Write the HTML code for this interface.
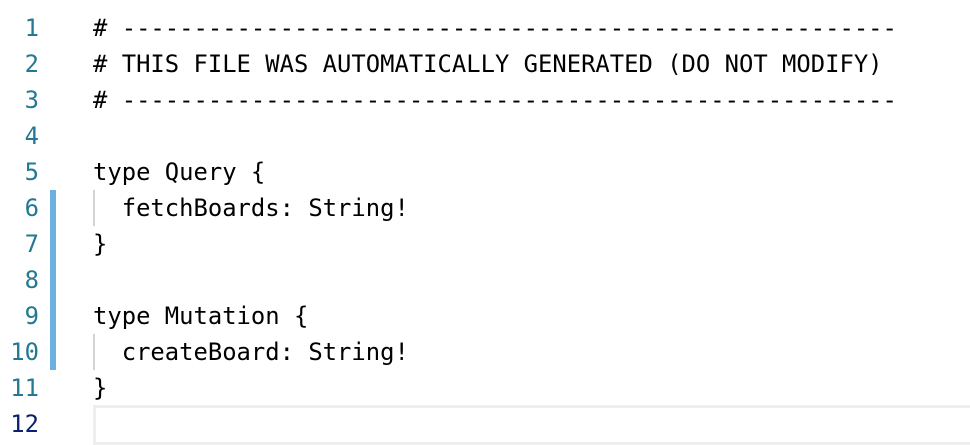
<!DOCTYPE html>
<html><head><style>
body{margin:0;width:970px;height:432px;background:#fff;overflow:hidden;position:relative;font-family:"DejaVu Sans Mono","Liberation Mono",monospace;font-size:23.85px;}
.ln{position:absolute;left:0;width:39px;text-align:right;color:#237893;height:36px;line-height:36px;}
.c{position:absolute;left:93px;color:#000;white-space:pre;height:36px;line-height:36px;}
.g{position:absolute;left:93px;width:2px;background:#d3d3d3;height:36px;}
.bar{position:absolute;left:50px;width:6px;top:190px;height:180px;background:#6bb0e0;}
.cur{position:absolute;left:93px;top:405px;width:890px;height:40px;border:3px solid #eeeeee;box-sizing:border-box;}
</style></head><body>
<div class="bar"></div>
<div class="cur"></div>
<div class="ln" style="top:10px">1</div><div class="c" style="top:10px"># ------------------------------------------------------</div>
<div class="ln" style="top:46px">2</div><div class="c" style="top:46px"># THIS FILE WAS AUTOMATICALLY GENERATED (DO NOT MODIFY)</div>
<div class="ln" style="top:82px">3</div><div class="c" style="top:82px"># ------------------------------------------------------</div>
<div class="ln" style="top:118px">4</div>
<div class="ln" style="top:154px">5</div><div class="c" style="top:154px">type Query {</div>
<div class="ln" style="top:190px">6</div><div class="g" style="top:190px"></div><div class="c" style="top:190px">  fetchBoards: String!</div>
<div class="ln" style="top:226px">7</div><div class="c" style="top:226px">}</div>
<div class="ln" style="top:262px">8</div>
<div class="ln" style="top:298px">9</div><div class="c" style="top:298px">type Mutation {</div>
<div class="ln" style="top:334px">10</div><div class="g" style="top:334px"></div><div class="c" style="top:334px">  createBoard: String!</div>
<div class="ln" style="top:370px">11</div><div class="c" style="top:370px">}</div>
<div class="ln" style="top:406px;color:#0b216f">12</div>
</body></html>
